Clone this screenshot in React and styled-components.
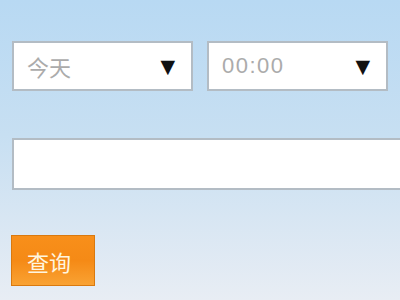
import React from "react";
import styled, { createGlobalStyle } from "styled-components";

const GlobalStyle = createGlobalStyle`
  html, body {
    margin: 0;
    padding: 0;
  }
  body {
    font-family: "Liberation Sans", "Noto Sans CJK SC", sans-serif;
  }
`;

const Page = styled.div`
  width: 400px;
  height: 300px;
  overflow: hidden;
  box-sizing: border-box;
  padding: 41px 0 0 12px;
  background: linear-gradient(to bottom, #b8d9f3 0%, #c7dff2 45%, #e8edf4 100%);
  display: flex;
  flex-direction: column;
`;

const Row = styled.div`
  display: flex;
  gap: 14px;
`;

const Select = styled.div`
  width: ${(p) => p.w}px;
  height: 50px;
  box-sizing: border-box;
  border: 2px solid #b3bcc4;
  background: #fff;
  display: flex;
  align-items: center;
  justify-content: space-between;
  padding: 0 16px 0 13px;
  color: #ababab;
  font-size: 22px;
`;

const Label = styled.span`
  letter-spacing: ${(p) => p.ls || 0}px;
`;

const Arrow = styled.span`
  color: #111;
  font-size: 19px;
  font-family: "DejaVu Sans", sans-serif;
`;

const Input = styled.div`
  margin-top: 47px;
  width: 400px;
  height: 52px;
  box-sizing: border-box;
  border: 2px solid #b3bcc4;
  border-right: none;
  background: #fff;
`;

const Button = styled.button`
  margin-top: 45px;
  margin-left: -1px;
  width: 84px;
  height: 51px;
  box-sizing: border-box;
  border: 1px solid #d9790f;
  background: linear-gradient(to bottom, #f88f1a 0%, #f58a16 50%, #f9a233 100%);
  color: #fff6e0;
  font-size: 22px;
  font-family: "Noto Sans CJK SC", sans-serif;
  text-align: left;
  padding: 0 0 0 15px;
  cursor: pointer;
`;

export default function App() {
  return (
    <>
      <GlobalStyle />
      <Page>
        <Row>
          <Select w={181}>
            <Label>今天</Label>
            <Arrow>▼</Arrow>
          </Select>
          <Select w={181}>
            <Label ls={1.5}>00:00</Label>
            <Arrow>▼</Arrow>
          </Select>
        </Row>
        <Input />
        <Button>查询</Button>
      </Page>
    </>
  );
}
